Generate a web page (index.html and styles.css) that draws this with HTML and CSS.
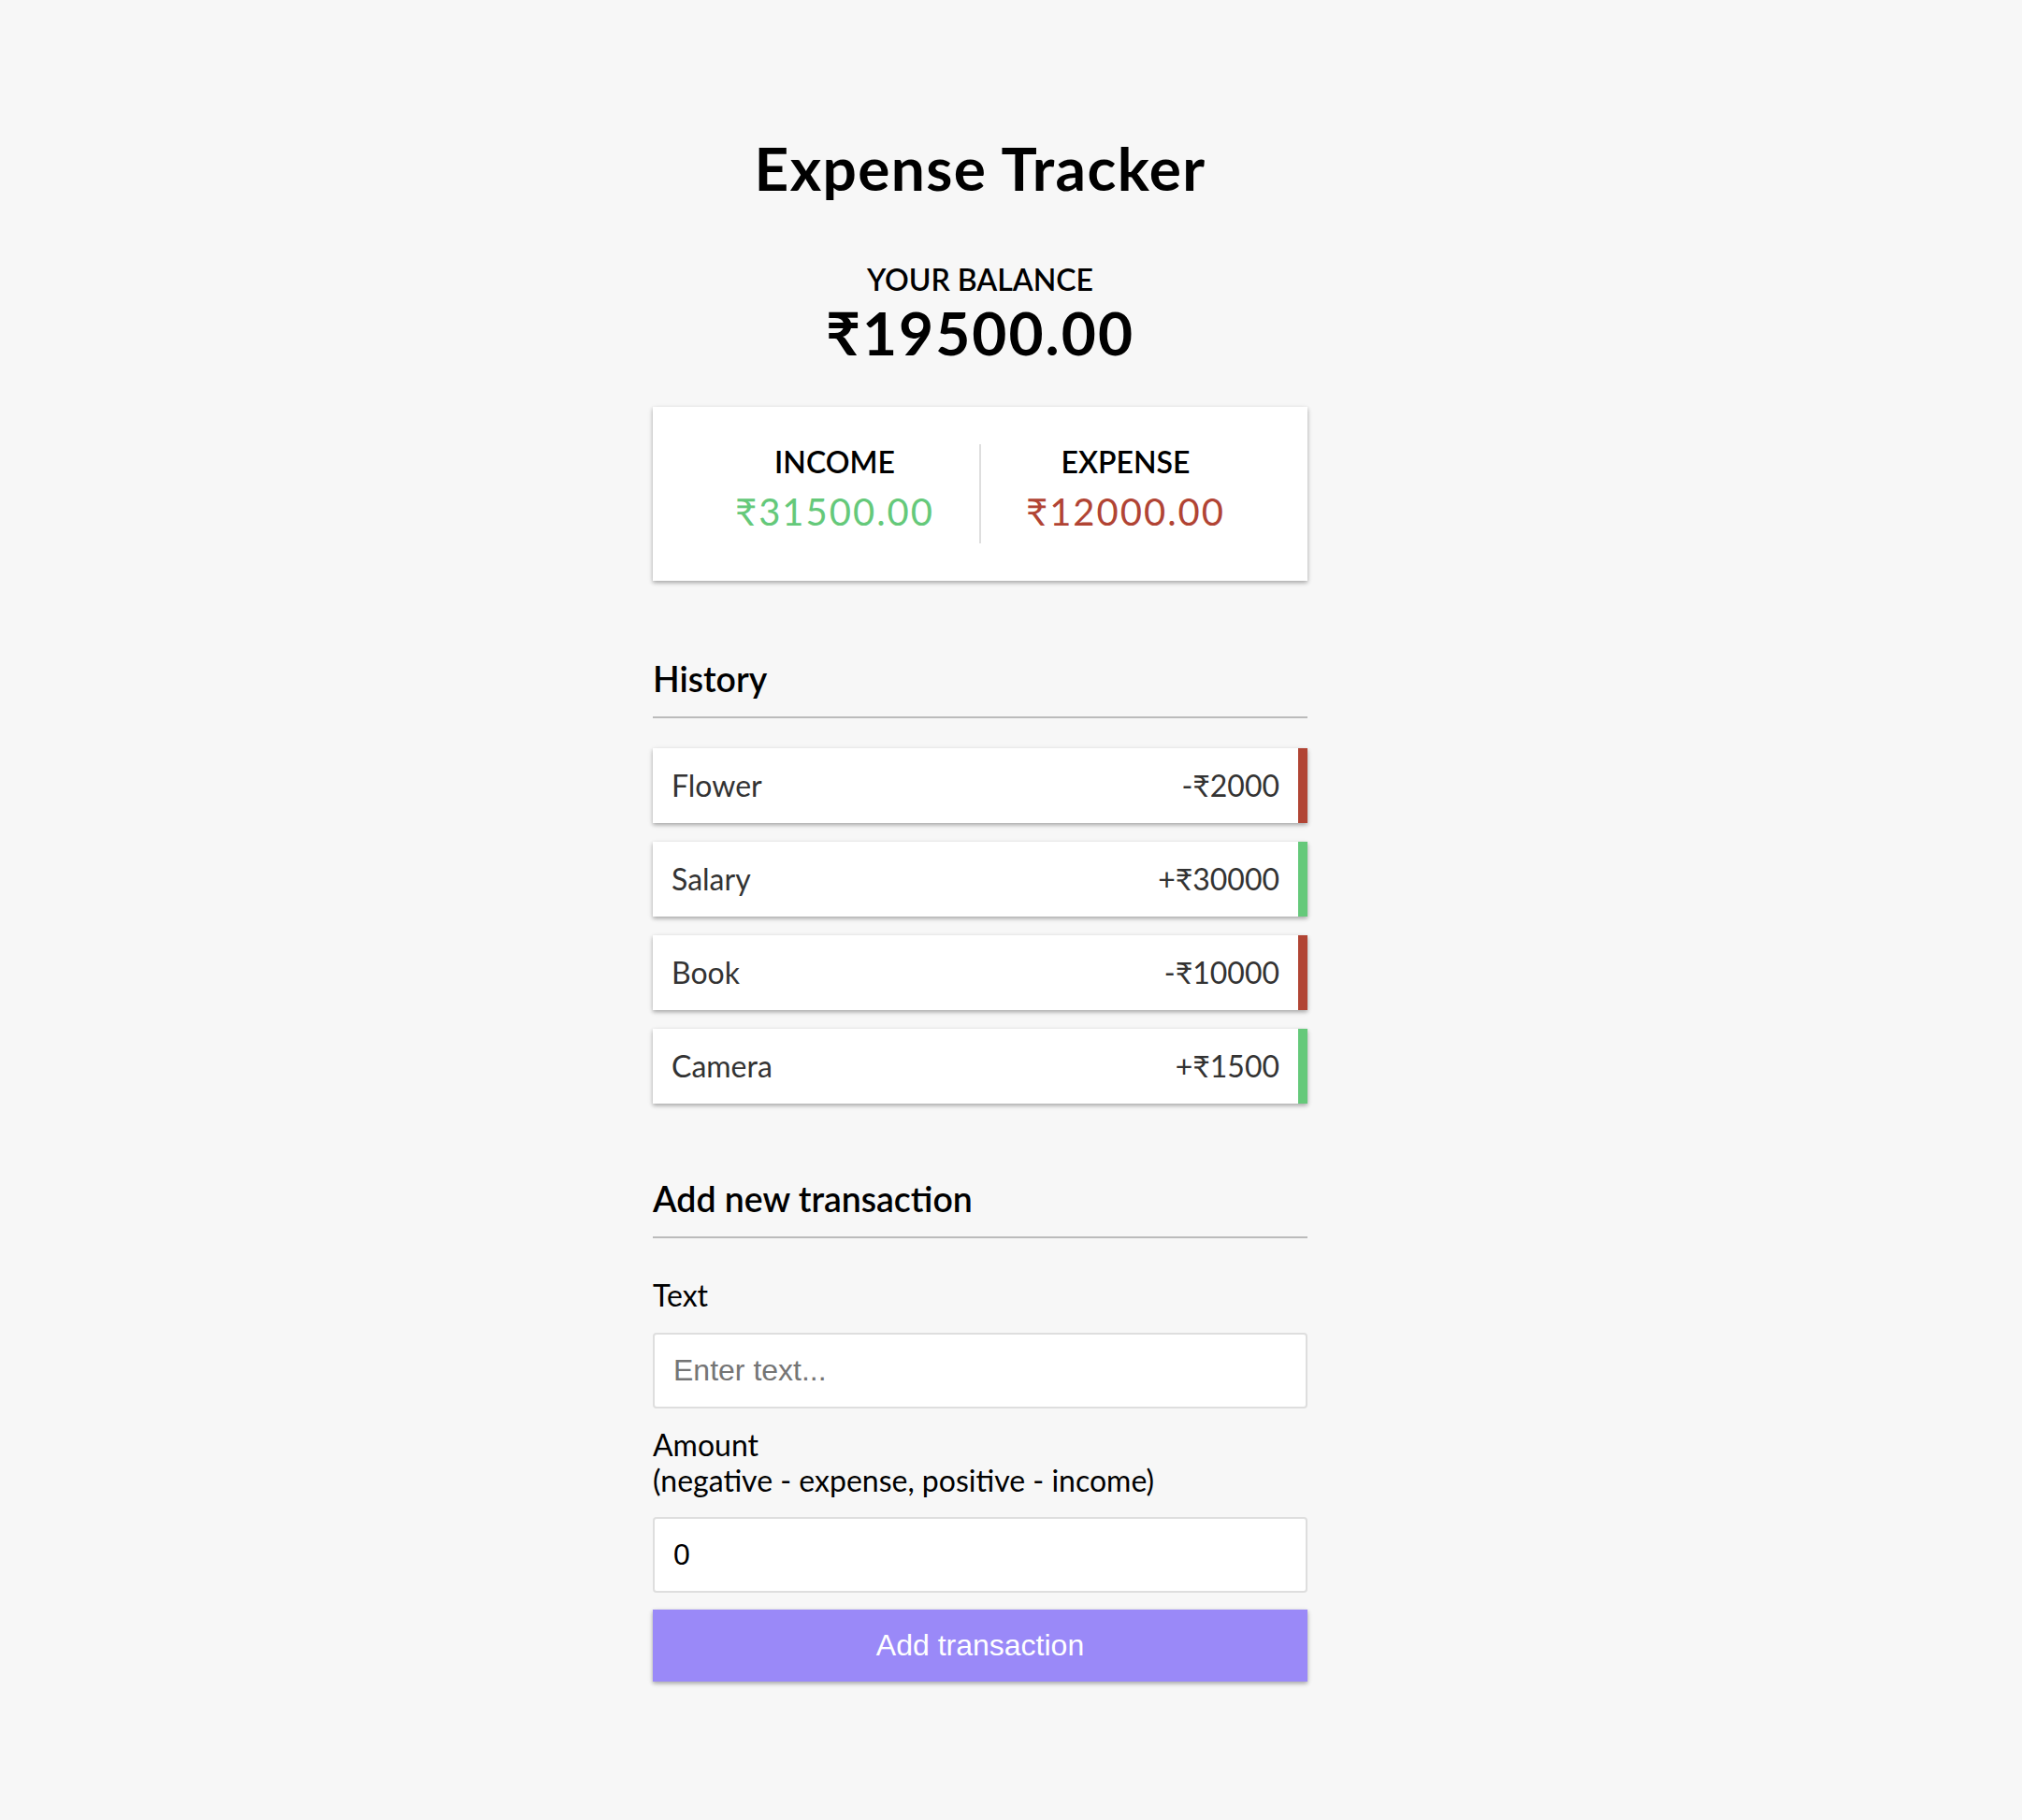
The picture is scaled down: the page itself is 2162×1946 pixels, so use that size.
FILE: index.html
```html
<!DOCTYPE html>
<html lang="en">
<head>
<meta charset="utf-8">
<title>Expense Tracker</title>
<link rel="stylesheet" href="styles.css">
</head>
<body>
<div class="container">
  <h1 class="title">Expense Tracker</h1>
  <h4 class="caps balance-label">Your Balance</h4>
  <h1 class="balance">₹19500.00</h1>
  <div class="inc-exp">
    <div class="inc-exp-col first">
      <h4 class="caps">Income</h4>
      <p class="money plus">₹31500.00</p>
    </div>
    <div class="inc-exp-col">
      <h4 class="caps">Expense</h4>
      <p class="money minus">₹12000.00</p>
    </div>
  </div>
  <h3 class="section">History</h3>
  <ul class="list">
    <li class="item minus"><span>Flower</span><span>-₹2000</span></li>
    <li class="item plus"><span>Salary</span><span>+₹30000</span></li>
    <li class="item minus"><span>Book</span><span>-₹10000</span></li>
    <li class="item plus"><span>Camera</span><span>+₹1500</span></li>
  </ul>
  <h3 class="section">Add new transaction</h3>
  <form class="form">
    <div class="form-control">
      <label class="field-label" for="text">Text</label>
      <input class="field" type="text" id="text" placeholder="Enter text...">
    </div>
    <div class="form-control">
      <label class="field-label" for="amount">Amount <br>(negative - expense, positive - income)</label>
      <input class="field" type="number" id="amount" value="0">
    </div>
    <button class="btn" type="button">Add transaction</button>
  </form>
</div>
</body>
</html>
```

FILE: styles.css
```css
* {
  box-sizing: border-box;
}

body {
  margin: 0;
  background-color: #f7f7f7;
  font-family: Lato, "Noto Sans", sans-serif;
  display: flex;
  justify-content: center;
  padding-right: 66px;
  min-height: 100vh;
}

.container {
  width: 700px;
  padding-top: 142px;
  padding-bottom: 100px;
}

.title {
  margin: 0;
  font-size: 64px;
  line-height: 1.2;
  font-weight: 700;
  letter-spacing: 1.4px;
  text-align: center;
  color: #000;
}

.caps {
  margin: 0;
  font-size: 32px;
  line-height: 1.2;
  font-weight: 600;
  text-transform: uppercase;
  color: #000;
}

.balance-label {
  margin-top: 61px;
  text-align: center;
}

.balance {
  margin: 0;
  font-size: 64px;
  line-height: 1.2;
  font-weight: 700;
  letter-spacing: 2px;
  text-align: center;
}

.inc-exp {
  background-color: #fff;
  box-shadow: 0 2px 6px rgba(0, 0, 0, 0.12), 0 2px 4px rgba(0, 0, 0, 0.24);
  padding: 40px;
  display: flex;
  justify-content: space-between;
  margin: 40px 0 83px;
}

.inc-exp-col {
  flex: 1;
  text-align: center;
}

.inc-exp-col.first {
  border-right: 2px solid #dedede;
}

.money {
  font-size: 40px;
  line-height: 1.2;
  letter-spacing: 2px;
  margin: 10px 0;
}

.money.plus {
  color: #65c97a;
}

.money.minus {
  color: #b14434;
}

.section {
  font-size: 37.44px;
  line-height: 1.2;
  font-weight: 600;
  border-bottom: 2px solid #bbb;
  padding-bottom: 17px;
  margin: 80px 0 22px;
  color: #000;
}

.list {
  list-style-type: none;
  padding: 0;
  margin: 32px 0 80px;
}

.item {
  background-color: #fff;
  box-shadow: 0 2px 6px rgba(0, 0, 0, 0.12), 0 2px 4px rgba(0, 0, 0, 0.24);
  color: #333;
  display: flex;
  justify-content: space-between;
  font-size: 32px;
  line-height: 40px;
  padding: 20px;
  margin: 20px 0;
}

.item.plus {
  border-right: 10px solid #65c97a;
}

.item.minus {
  border-right: 10px solid #b14434;
}

.field-label {
  display: inline-block;
  margin: 20px 0;
  font-size: 32px;
  line-height: 1.2;
  color: #000;
}

.field {
  display: block;
  width: 100%;
  border: 2px solid #dedede;
  border-radius: 4px;
  font-family: "Liberation Sans", Arial, sans-serif;
  font-size: 32px;
  padding: 20px;
  background: #fff;
  color: #000;
}

.field::placeholder {
  color: #757575;
}

.btn {
  cursor: pointer;
  background-color: #9a89f8;
  box-shadow: 0 2px 6px rgba(0, 0, 0, 0.12), 0 2px 4px rgba(0, 0, 0, 0.24);
  color: #fff;
  border: 0;
  display: block;
  font-family: "Liberation Sans", Arial, sans-serif;
  font-size: 32px;
  margin: 18px 0 60px;
  padding: 20px;
  width: 100%;
}
```
